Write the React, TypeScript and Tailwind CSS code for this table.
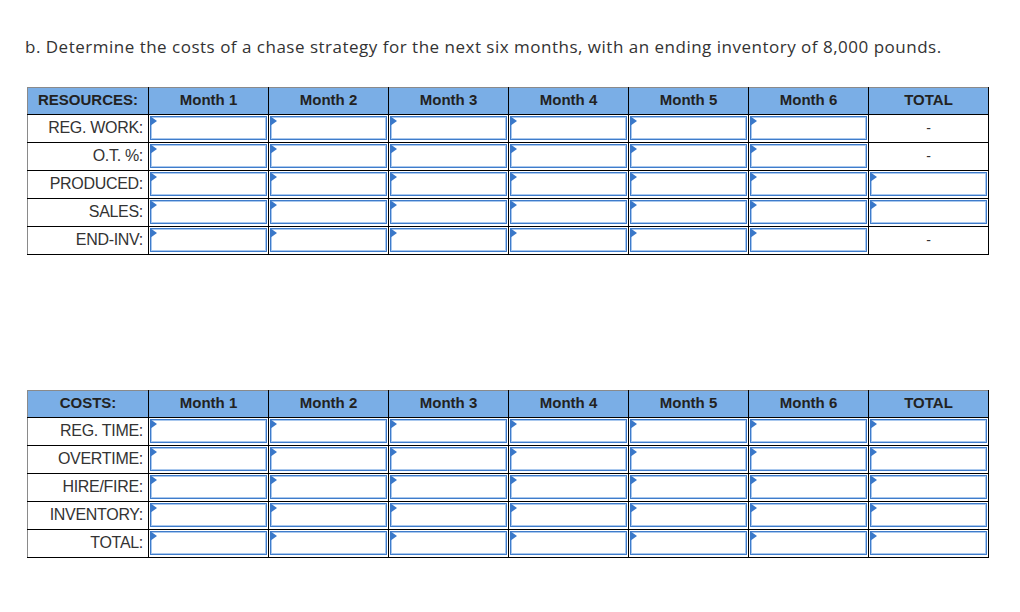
import React from 'react';

const months = ['Month 1', 'Month 2', 'Month 3', 'Month 4', 'Month 5', 'Month 6'];

// total column: 'input' gets an entry box, 'dash' shows a placeholder
const resources = [
    { label: 'REG. WORK:', total: 'dash' },
    { label: 'O.T. %:', total: 'dash' },
    { label: 'PRODUCED:', total: 'input' },
    { label: 'SALES:', total: 'input' },
    { label: 'END-INV:', total: 'dash' },
];

const costs = [
    { label: 'REG. TIME:', total: 'input' },
    { label: 'OVERTIME:', total: 'input' },
    { label: 'HIRE/FIRE:', total: 'input' },
    { label: 'INVENTORY:', total: 'input' },
    { label: 'TOTAL:', total: 'input' },
];

const EntryBox = () => (
    <div className="relative h-[24px] w-full bg-white border border-[#3f7ccb] shadow-[inset_0_0_0_1px_#a9c8ee]">
        <svg className="absolute -left-[1px] -top-[1px]" width="7" height="10" viewBox="0 0 7 10">
            <polygon points="0,0 7,5 0,10" fill="#3a78c9" />
        </svg>
    </div>
);

const Grid = ({ title, rows }: { title: string; rows: { label: string; total: string }[] }) => (
    <table className="border-collapse table-fixed w-[961px] ml-[27px] border-t border-l border-t-[#8a8a8a] border-l-[#8a8a8a] font-['Liberation_Sans',Arial,sans-serif]">
        <colgroup>
            <col className="w-[121px]" />
            {months.map((m) => <col key={m} className="w-[120px]" />)}
            <col className="w-[120px]" />
        </colgroup>
        <thead>
            <tr className="h-[27px] bg-[#7aaee6] text-[#222] text-[15px] font-bold">
                <th className="border-r border-b border-black text-center font-bold">{title}</th>
                {months.map((m) => (
                    <th key={m} className="border-r border-b border-black text-center font-bold">{m}</th>
                ))}
                <th className="border-r border-b border-black text-center font-bold">TOTAL</th>
            </tr>
        </thead>
        <tbody>
            {rows.map((r) => (
                <tr key={r.label} className="h-[28px]">
                    <td className="border-r border-b border-black text-right text-[#333] text-[16px] pr-[5px] tracking-[-0.3px]">{r.label}</td>
                    {months.map((m) => (
                        <td key={m} className="border-r border-b border-black px-[1px] py-0">
                            <EntryBox />
                        </td>
                    ))}
                    <td className="border-r border-b border-black px-[1px] py-0 text-center text-[14px] text-[#333]">
                        {r.total === 'input' ? <EntryBox /> : '-'}
                    </td>
                </tr>
            ))}
        </tbody>
    </table>
);

export default function App() {
    return (
        <div className="w-[1020px] h-[612px] bg-white">
            <p className="pl-[25px] pt-[34px] text-[17px] text-[#333] font-['Open_Sans','Lato',sans-serif] tracking-[0.5px]">
                b. Determine the costs of a chase strategy for the next six months, with an ending inventory of 8,000 pounds.
            </p>
            <div className="mt-[27px]">
                <Grid title="RESOURCES:" rows={resources} />
            </div>
            <div className="mt-[135px]">
                <Grid title="COSTS:" rows={costs} />
            </div>
        </div>
    );
}
